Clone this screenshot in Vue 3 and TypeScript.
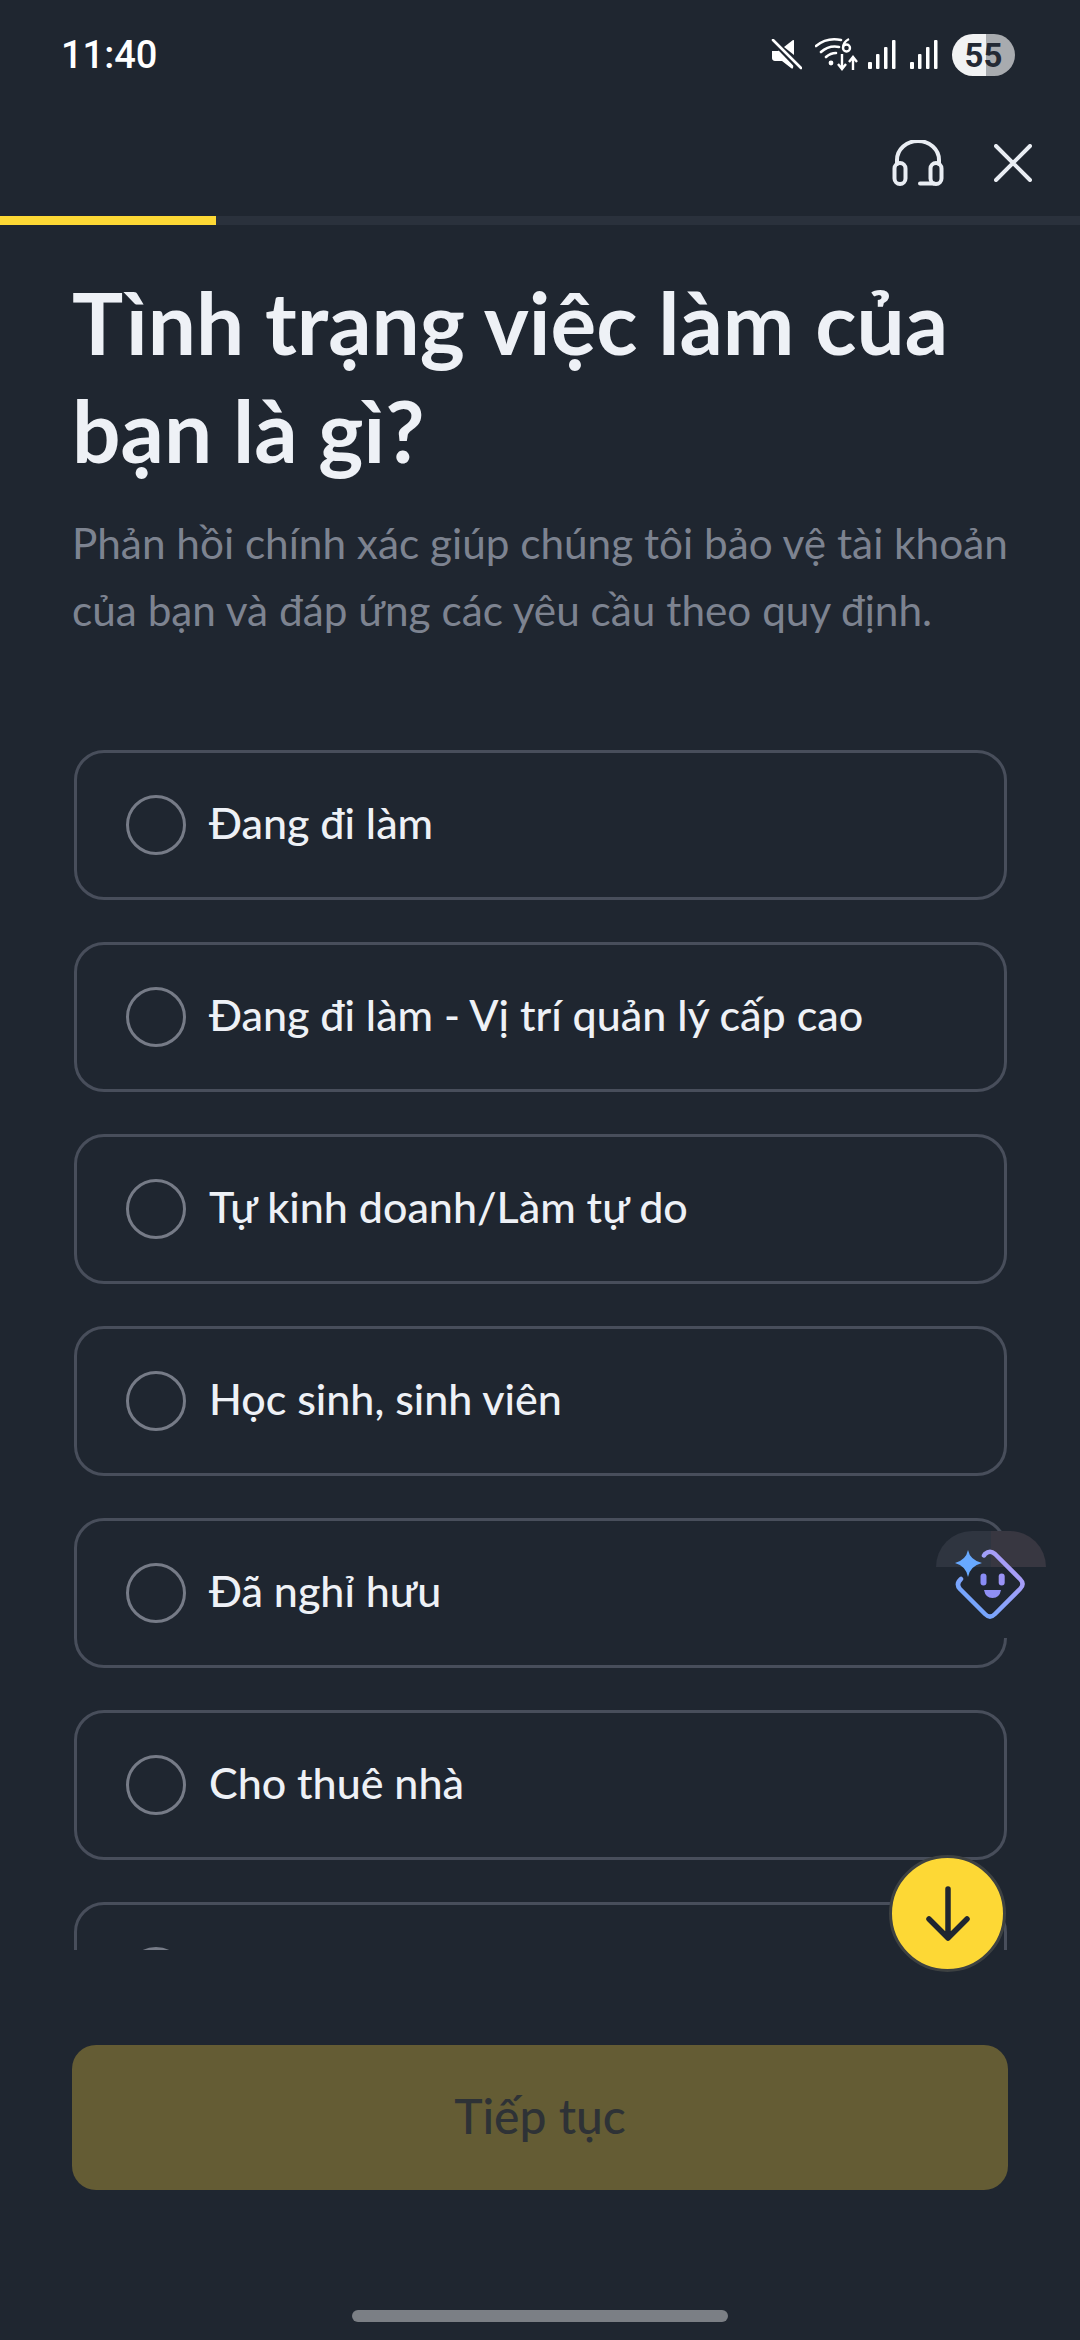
<script setup lang="ts">
const options: string[] = [
  'Đang đi làm',
  'Đang đi làm - Vị trí quản lý cấp cao',
  'Tự kinh doanh/Làm tự do',
  'Học sinh, sinh viên',
  'Đã nghỉ hưu',
  'Cho thuê nhà',
  '',
]
</script>

<template>
  <div class="page">
    <div class="status">
      <span class="time">11:40</span>
      <div class="status-icons">
        <svg class="i-mute" width="32" height="32" viewBox="0 0 32 32">
          <path d="M2 12h6l3-2 13 13-1 6q-.5 1-2 0l-9-7H5q-3-.5-3-3z" fill="#fff" />
          <path d="M14 8l9-7q1-.5 1 1v14z" fill="#fff" />
          <path d="M3 2l27 28" stroke="#1f2630" stroke-width="5" />
          <path d="M3 1l28 28" stroke="#fff" stroke-width="2.6" stroke-linecap="round" />
        </svg>
        <svg class="i-wifi" width="44" height="36" viewBox="0 0 44 36">
          <path d="M1 9Q12 0 26 3M6 15Q14 8 24 10M11 20Q15.500 16 21 16" fill="none" stroke="#fff" stroke-width="2.600" stroke-linecap="round" />
          <circle cx="16" cy="26" r="2.400" fill="#fff" />
          <path d="M27 17V31M23 27l4 5 4-5M38 33V21M34 25l4-5 4 5" fill="none" stroke="#fff" stroke-width="2.400" />
          <path d="M34 2q-6 3-6 9a3.500 3.500 0 1 0 7 0 3.500 3.500 0 0 0-7 0" fill="none" stroke="#fff" stroke-width="2.400" />
        </svg>
        <svg class="i-signal" width="28" height="30" viewBox="0 0 28 30">
          <rect x="0" y="22" width="4" height="7" rx="1" fill="#fff" />
          <rect x="8" y="14" width="3.500" height="15" rx="1" fill="#fff" />
          <rect x="16" y="7" width="3.500" height="22" rx="1" fill="#fff" />
          <rect x="24" y="0" width="3.500" height="29" rx="1" fill="#fff" />
        </svg>
        <svg class="i-signal second" width="28" height="30" viewBox="0 0 28 30">
          <rect x="0" y="22" width="4" height="7" rx="1" fill="#fff" />
          <rect x="8" y="14" width="3.500" height="15" rx="1" fill="#fff" />
          <rect x="16" y="7" width="3.500" height="22" rx="1" fill="#fff" />
          <rect x="24" y="0" width="3.500" height="29" rx="1" fill="#fff" />
        </svg>
        <div class="battery"><span>55</span></div>
      </div>
    </div>

    <div class="toolbar">
      <svg width="52" height="46" viewBox="0 0 52 46" fill="none" stroke="#e9edf3" stroke-width="4" stroke-linecap="round" stroke-linejoin="round">
        <path d="M5 24V20a21 19 0 0 1 42 0v4" />
        <rect x="2.500" y="23" width="11" height="21" rx="5.500" />
        <rect x="38.500" y="23" width="11" height="21" rx="5.500" />
        <path d="M28 43.500h14" />
      </svg>
      <svg class="close" width="38" height="38" viewBox="0 0 38 38" fill="none" stroke="#e9edf3" stroke-width="4" stroke-linecap="round">
        <path d="M2 2l34 34M36 2L2 36" />
      </svg>
    </div>

    <div class="progress"><div class="progress-fill"></div></div>

    <main class="content">
      <h1 class="title">Tình trạng việc làm của bạn là gì?</h1>
      <p class="subtitle">Phản hồi chính xác giúp chúng tôi bảo vệ tài khoản của bạn và đáp ứng các yêu cầu theo quy định.</p>

      <div class="list">
        <div v-for="(o, i) in options" :key="i" class="option">
          <span class="radio"></span>
          <span class="label">{{ o }}</span>
        </div>
      </div>

      <div class="submit">Tiếp tục</div>
    </main>

    <div class="home-bar"></div>

    <div class="assistant">
      <div class="ears"><span></span><span></span></div>
      <svg class="bot" width="76" height="76" viewBox="0 0 76 76" fill="none">
        <defs>
          <linearGradient id="botg" x1="0" y1="1" x2="1" y2="0">
            <stop offset="0" stop-color="#63a9ff" />
            <stop offset="1" stop-color="#bb9af5" />
          </linearGradient>
        </defs>
        <path d="M30 7.500L31 6Q36 1.500 41 6L66 31Q71 36 66 41L41 66Q36 71 31 66L6 41Q1.500 36 7 31" stroke="url(#botg)" stroke-width="4.500" stroke-linecap="round" stroke-linejoin="round" />
        <path d="M14 0q2 10 14 13-12 3-14 14-2-11-13-14 11-3 13-13z" fill="#68a9ff" transform="translate(0 2)" />
        <rect x="26.500" y="25.500" width="6" height="12" rx="3" fill="#8a8df5" />
        <rect x="44.700" y="25.500" width="6" height="12" rx="3" fill="#9b94f6" />
        <path d="M30 42h17q-1.500 8-8.500 8T30 42z" fill="#8f8ff5" />
      </svg>
    </div>

    <div class="scroll-down">
      <svg width="44" height="56" viewBox="0 0 44 56" fill="none" stroke="#1f2630" stroke-width="5.500" stroke-linecap="round" stroke-linejoin="round">
        <path d="M22 3v49M3 33l19 19 19-19" />
      </svg>
    </div>
  </div>
</template>

<style>
html, body { margin: 0; background: #1f2630; }
</style>

<style scoped>
.page {
  position: relative;
  width: 1080px;
  height: 2340px;
  overflow: hidden;
  background: #1f2630;
  color: #eef1f6;
  font-family: Lato, "Noto Sans", sans-serif;
  display: flex;
  flex-direction: column;
}
.status {
  height: 110px;
  padding: 0 65px 0 61px;
  display: flex;
  align-items: center;
  justify-content: space-between;
  box-sizing: border-box;
}
.time {
  font-family: Roboto, sans-serif;
  font-size: 38px;
  font-weight: 500;
  color: #fff;
}
.status-icons { display: flex; align-items: center; }
.i-wifi { margin-left: 13px; }
.i-signal { margin-left: 9px; }
.i-signal.second { margin-left: 14px; }
.battery {
  margin-left: 14px;
  width: 63px;
  height: 42px;
  border-radius: 21px;
  background: linear-gradient(90deg, #f1f2f3 0 54%, #a8abaf 54% 100%);
  display: flex;
  align-items: center;
  justify-content: center;
  color: #232934;
  font-family: Roboto, sans-serif;
  font-size: 33px;
  font-weight: 700;
}
.toolbar {
  height: 106px;
  padding: 0 48px 0 0;
  display: flex;
  align-items: center;
  justify-content: flex-end;
  box-sizing: border-box;
}
.close { margin-left: 50px; }
.progress { height: 9px; background: #2a313c; }
.progress-fill { width: 216px; height: 100%; background: #fdd835; }
.content {
  flex: 1;
  padding: 43px 72px 0;
  display: flex;
  flex-direction: column;
  min-height: 0;
}
.title {
  margin: 0;
  font-size: 85.500px;
  line-height: 108px;
  font-weight: 700;
  color: #eef1f6;
}
.subtitle {
  margin: 25px 0 0;
  font-size: 42.300px;
  line-height: 67px;
  color: #7d8390;
}
.list {
  margin-top: 107px;
  height: 1200px;
  overflow: hidden;
  display: flex;
  flex-direction: column;
  gap: 42px;
  flex: none;
}
.option {
  flex: none;
  height: 150px;
  margin: 0 1px 0 2px;
  box-sizing: border-box;
  border: 3px solid #484e5b;
  border-radius: 30px;
  display: flex;
  align-items: center;
  padding-left: 49px;
}
.radio {
  width: 60px;
  height: 60px;
  box-sizing: border-box;
  border: 3.500px solid #767b87;
  border-radius: 50%;
  flex: none;
}
.label {
  margin-left: 23px;
  padding-bottom: 5px;
  font-size: 43px;
  font-weight: 500;
  color: #eef1f6;
}
.submit {
  margin-top: 95px;
  height: 145px;
  box-sizing: border-box;
  padding-bottom: 4px;
  border-radius: 24px;
  background: #645c34;
  display: flex;
  align-items: center;
  justify-content: center;
  font-size: 48px;
  font-weight: 500;
  color: #2e3236;
}
.home-bar {
  position: absolute;
  left: 352px;
  top: 2310px;
  width: 376px;
  height: 12px;
  border-radius: 6px;
  background: #7b7f85;
}
.assistant {
  position: absolute;
  left: 936px;
  top: 1531px;
  width: 110px;
  height: 107px;
  background: #1f2630;
}
.ears {
  position: absolute;
  inset: 0 0 auto 0;
  height: 36px;
  display: flex;
  border-radius: 55px 55px 0 0;
  overflow: hidden;
}
.ears span { flex: 1; background: #2f3540; }
.ears span + span { background: #383741; }
.bot { position: absolute; left: 18px; top: 17px; }
.scroll-down {
  position: absolute;
  left: 889px;
  top: 1855px;
  width: 117px;
  height: 117px;
  box-sizing: border-box;
  border: 3px solid #3d4142;
  border-radius: 50%;
  background: #fdd835;
  display: flex;
  align-items: center;
  justify-content: center;
}
</style>
